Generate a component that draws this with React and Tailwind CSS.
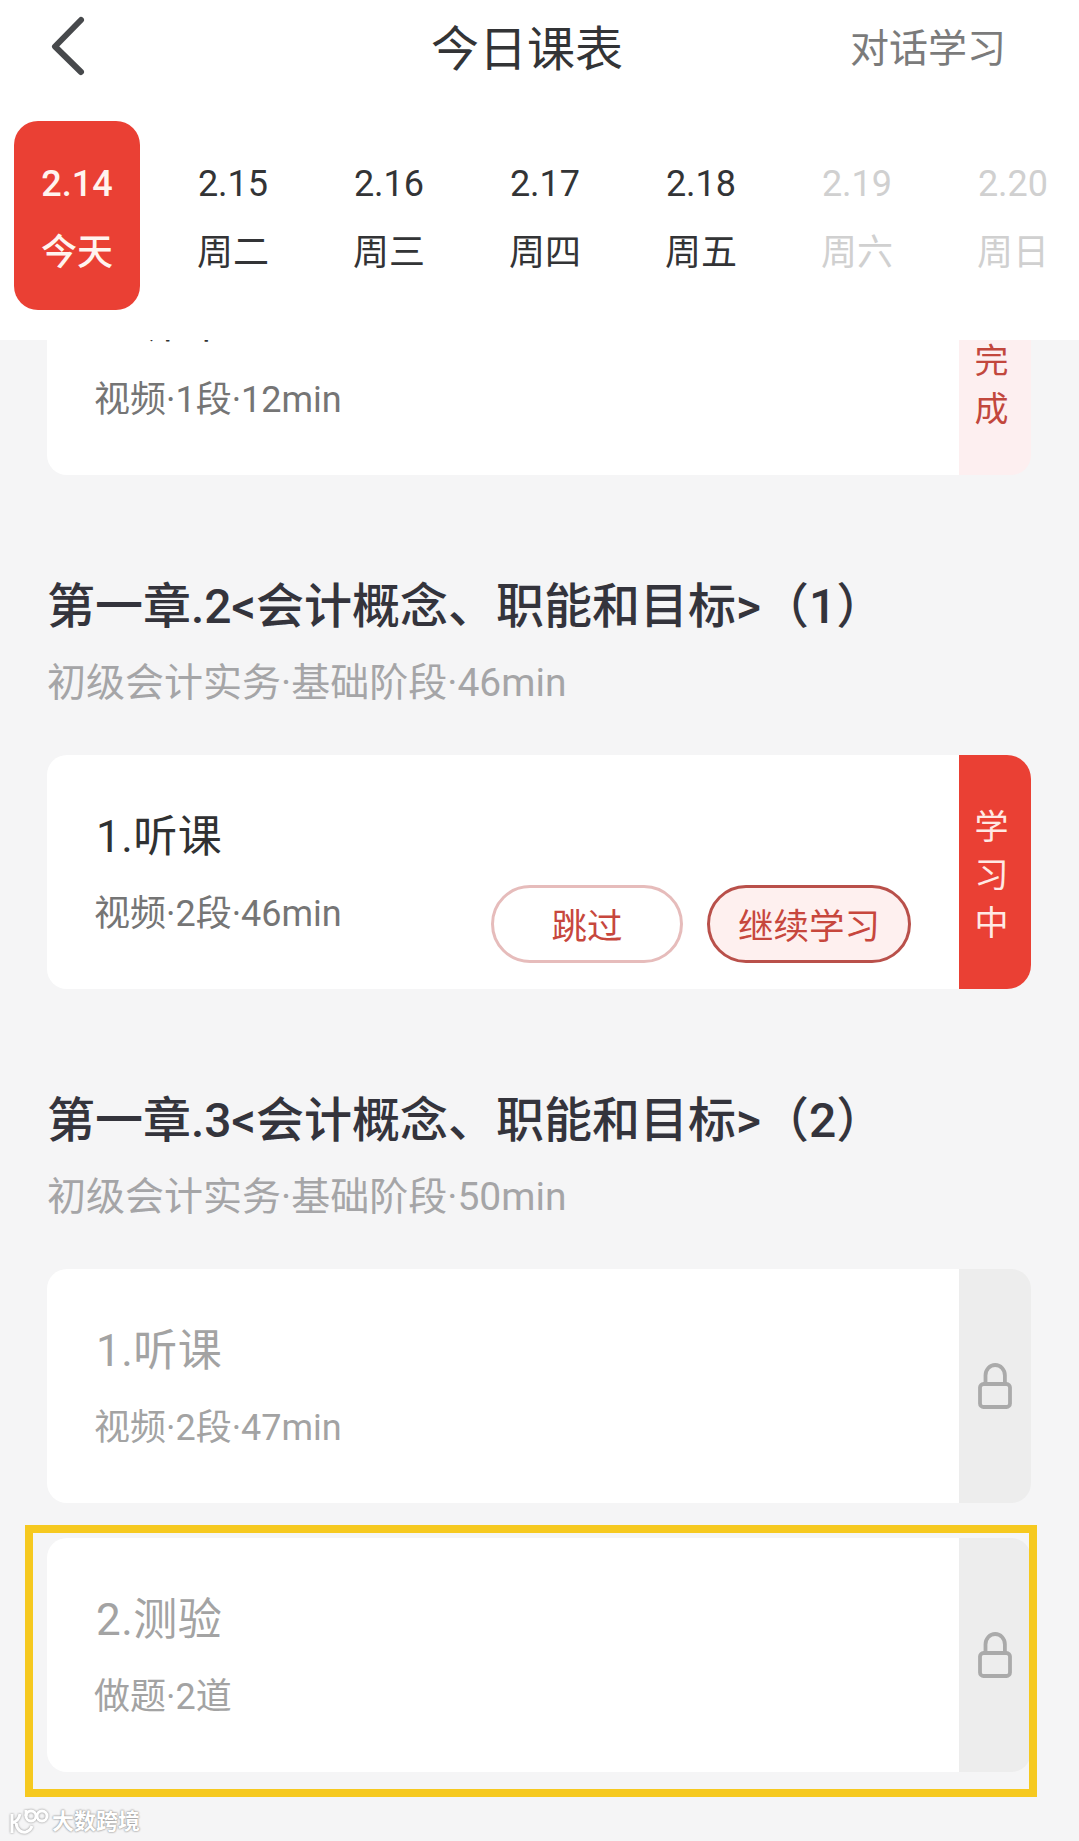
import React, { useState } from 'react';

const days = [
  { date: '2.14', label: '今天' },
  { date: '2.15', label: '周二' },
  { date: '2.16', label: '周三' },
  { date: '2.17', label: '周四' },
  { date: '2.18', label: '周五' },
  { date: '2.19', label: '周六', disabled: true },
  { date: '2.20', label: '周日', disabled: true },
];

const LockIcon = () => (
  <svg className="h-[46px] w-[34px]" viewBox="0 0 34 46" fill="none" stroke="#aaaaaa" strokeWidth="3.8">
    <rect x="2" y="21" width="30" height="23" rx="3.5" />
    <path d="M7.5 21V12.5a9.7 10.5 0 0 1 19.4 0V21" />
  </svg>
);

const VerticalText = ({ text }) => (
  <div className="flex flex-col items-center pt-1.5 pr-[7px] text-[34px] leading-[48px]">
    {text.split('').map((char) => (
      <span key={char}>{char}</span>
    ))}
  </div>
);

const LessonCard = ({ title, info, status, children }) => {
  const locked = status === 'locked';

  return (
    <div className="flex h-[234px] w-[984px]">
      <div className="flex flex-1 justify-between rounded-l-[20px] bg-white pl-12">
        <div className="pt-[50px]">
          <h3 className={`pl-px text-[44px] leading-[64px] tracking-[0.5px] ${locked ? 'text-[#a3a3a3]' : 'text-[#303132]'}`}>{title}</h3>
          <p className={`mt-[18px] -ml-px text-[36px] leading-[54px] ${locked ? 'text-[#a3a3a3]' : 'text-[#757575]'}`}>{info}</p>
        </div>
        {children}
      </div>
      {/* Statut sur le côté droit */}
      {status === 'done' && (
        <div className="flex w-[72px] items-center justify-center rounded-r-[20px] bg-[#fdeff0] text-[#c2473d]">
          <VerticalText text="已完成" />
        </div>
      )}
      {status === 'active' && (
        <div className="flex w-[72px] items-center justify-center rounded-r-[24px] bg-[#ea4034] text-[#ffe9e4]">
          <VerticalText text="学习中" />
        </div>
      )}
      {locked && (
        <div className="flex w-[72px] items-center justify-center rounded-r-[20px] bg-[#ededed]">
          <LockIcon />
        </div>
      )}
    </div>
  );
};

const ChapterTitle = ({ title, info }) => (
  <div className="mt-24 -ml-px mb-[42px] whitespace-nowrap">
    <h2 className="text-[48px] font-medium leading-[72px] text-[#34343c]">{title}</h2>
    <p className="mt-2.5 text-[39px] leading-[60px] text-[#a5a5a7]">{info}</p>
  </div>
);

const Watermark = () => (
  <div className="mt-[34px] ml-[-39px] flex h-8 items-center gap-[3px] text-white">
    <svg className="h-7 w-10 overflow-visible drop-shadow-[0_0_1px_#888888]" viewBox="0 0 40 28" fill="none" stroke="currentColor" strokeWidth="3">
      <path d="M3 6v19M11 6C10 11 7 14 3 15M7 15c1 7 5 10 10 9 3-1 5-3 6-6" />
      <path d="M17 2v6" />
      <circle cx="22" cy="8" r="5" />
      <circle cx="33" cy="8" r="5" />
    </svg>
    <span className="text-[22px] font-bold leading-8 [text-shadow:0_0_2px_#888888,0_0_2px_#aaaaaa]">大数跨境</span>
  </div>
);

const App = () => {
  const [selected, setSelected] = useState('2.14');

  return (
    <div className="h-[1841px] w-[1079px] overflow-hidden bg-[#f5f5f6] font-[Roboto,'Noto_Sans_CJK_SC',sans-serif]">
      <header className="relative z-10 h-[340px] bg-white">
        <div className="grid h-[96px] grid-cols-[1fr_auto_1fr] items-center pl-[50px] pr-[73px]">
          <button aria-label="返回" className="-mt-1 justify-self-start">
            <svg className="h-[60px] w-9" viewBox="0 0 36 60" fill="none" stroke="#47494c" strokeWidth="6" strokeLinecap="round" strokeLinejoin="round">
              <path d="M31 4L5 30.5l26 25.5" />
            </svg>
          </button>
          <h1 className="pt-1 pr-[2px] text-[48px] leading-[72px] text-[#333436]">今日课表</h1>
          <button className="justify-self-end pt-0.5 text-[39px] leading-[58px] text-[#7b7b7b]">对话学习</button>
        </div>

        {/* Jours de la semaine */}
        <nav className="mt-[25px] flex gap-[30px] pl-3.5">
          {days.map((day) => (
            <button
              key={day.date}
              disabled={day.disabled}
              onClick={() => setSelected(day.date)}
              className={`flex h-[189px] w-[126px] shrink-0 flex-col items-center rounded-[24px] pt-9 text-[36px] ${
                selected === day.date
                  ? 'bg-[#ea4034] font-medium text-[#fff4ef]'
                  : day.disabled
                    ? 'text-[#d0d0d0]'
                    : 'text-[#333436]'
              }`}
            >
              <span className="leading-[54px]">{day.date}</span>
              <span className="mt-[15px] leading-[54px]">{day.label}</span>
            </button>
          ))}
        </nav>
      </header>

      <main className="h-[1501px] overflow-hidden pl-12">
        <div className="-mt-[99px] -ml-px">
          <LessonCard title="1.听课" info="视频·1段·12min" status="done" />
        </div>

        <ChapterTitle title="第一章.2<会计概念、职能和目标>（1）" info="初级会计实务·基础阶段·46min" />
        <div className="-ml-px">
          <LessonCard title="1.听课" info="视频·2段·46min" status="active">
            <div className="flex items-end gap-6 pb-[26px] pr-12 text-[35.5px] text-[#c7473d]">
              <button className="h-[78px] w-[192px] rounded-full border-3 border-[#e6bcbb] bg-white pt-2">跳过</button>
              <button className="h-[78px] w-[204px] rounded-full border-3 border-[#b9504a] bg-[#fef0ef] pt-2">继续学习</button>
            </div>
          </LessonCard>
        </div>

        <ChapterTitle title="第一章.3<会计概念、职能和目标>（2）" info="初级会计实务·基础阶段·50min" />
        <div className="-ml-px flex flex-col gap-[35px]">
          <LessonCard title="1.听课" info="视频·2段·47min" status="locked" />
          <div className="relative w-[984px]">
            <LessonCard title="2.测验" info="做题·2道" status="locked" />
            {/* Cadre jaune autour du test */}
            <div className="pointer-events-none absolute -top-[13px] -right-1.5 -bottom-[25px] -left-[22px] border-8 border-[#f6c91f]" />
          </div>
        </div>
        <Watermark />
      </main>
    </div>
  );
};

export default App;
